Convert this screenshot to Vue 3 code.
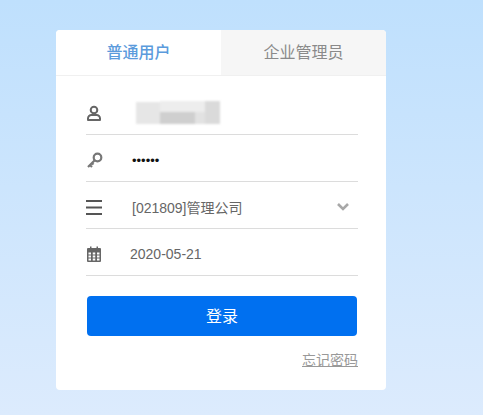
<script setup>
const tabs = [
  { label: '普通用户', active: true },
  { label: '企业管理员', active: false }
]
</script>

<template>
  <div class="page">
    <div class="card">
      <div class="tabs">
        <div v-for="t in tabs" :key="t.label" class="tab" :class="{ active: t.active }">{{ t.label }}</div>
      </div>
      <div class="form">
        <div class="row">
          <span class="icon">
            <svg width="16" height="16" viewBox="0 0 16 16" fill="none" stroke="#666" stroke-width="2">
              <circle cx="8" cy="5" r="3.3" />
              <path d="M2 15v-1.500c0-2 1.600-3.500 3.500-3.500h5c1.900 0 3.500 1.500 3.500 3.500V15z" stroke-linejoin="round" />
            </svg>
          </span>
          <div class="mosaic">
            <i class="m1"></i><i class="m2"></i><i class="m3"></i><i class="m4"></i><i class="m5"></i>
          </div>
        </div>
        <div class="row">
          <span class="icon">
            <svg width="18" height="18" viewBox="0 0 18 18" fill="none" stroke="#777" stroke-width="2.2">
              <circle cx="11.500" cy="6.500" r="3.800" />
              <path d="M8.500 9.500L2 16M4 14l2 2M6 12l1.500 1.500" />
            </svg>
          </span>
          <span class="dots">••••••</span>
        </div>
        <div class="row">
          <span class="icon">
            <svg width="16" height="15" viewBox="0 0 16 15" fill="#555">
              <rect y="0" width="16" height="2" />
              <rect y="6.500" width="16" height="2" />
              <rect y="13" width="16" height="2" />
            </svg>
          </span>
          <span class="value">[021809]管理公司</span>
          <svg class="chev" width="12" height="8" viewBox="0 0 12 8" fill="none" stroke="#a8a8a8" stroke-width="2.600">
            <path d="M1 1l5 5 5-5" />
          </svg>
        </div>
        <div class="row">
          <span class="icon cal">
            <svg width="14" height="16" viewBox="0 0 14 16">
              <path fill="#666" d="M1 2h2V0.500h1.500V2h5V0.500H11V2h2a1 1 0 0 1 1 1v12a1 1 0 0 1-1 1H1a1 1 0 0 1-1-1V3a1 1 0 0 1 1-1z" />
              <path fill="#fff" d="M1.500 6.500h2.500v2H1.500zM5.750 6.500h2.500v2h-2.500zM10 6.500h2.500v2H10zM1.500 9.500h2.500v2H1.500zM5.750 9.500h2.500v2h-2.500zM10 9.500h2.500v2H10zM1.500 12.500h2.500v2H1.500zM5.750 12.500h2.500v2h-2.500zM10 12.500h2.500v2H10z" />
            </svg>
          </span>
          <span class="value date">2020-05-21</span>
        </div>
        <button class="login" type="button"><span>登录</span></button>
        <div class="forgot"><a>忘记密码</a></div>
      </div>
    </div>
  </div>
</template>

<style scoped>
.page {
  width: 483px;
  height: 415px;
  box-sizing: border-box;
  padding: 30px 0 0 56px;
  overflow: hidden;
  background: linear-gradient(180deg, #bfe0fd 0%, #dcebfd 100%);
  font-family: "Liberation Sans", "Noto Sans CJK SC", sans-serif;
}
.card {
  width: 330px;
  height: 360px;
  background: #fff;
  border-radius: 4px;
  overflow: hidden;
}
.tabs {
  display: flex;
  height: 45px;
  border-bottom: 1px solid #f0f0f0;
}
.tab {
  flex: 1;
  text-align: center;
  line-height: 45px;
  font-size: 16px;
  color: #8a8a8a;
  background: #f6f6f6;
}
.tab.active {
  color: #5b9bdc;
  font-weight: 500;
  background: #fff;
}
.form {
  padding: 12px 28px 0 30px;
}
.row {
  display: flex;
  align-items: center;
  box-sizing: border-box;
  height: 47px;
  padding-top: 4px;
  border-bottom: 1px solid #dcdcdc;
}
.icon {
  width: 46px;
  display: flex;
  flex: none;
}
.icon.cal {
  padding-left: 1px;
  width: 45px;
}
.mosaic {
  position: relative;
  width: 88px;
  height: 24px;
  margin-top: -2px;
  filter: blur(1px);
}
.mosaic i {
  position: absolute;
  display: block;
}
.mosaic .m1 { left: 4px; top: 2px; width: 24px; height: 22px; background: #e6e6e6; }
.mosaic .m2 { left: 28px; top: 12px; width: 35px; height: 12px; background: #cfcfcf; }
.mosaic .m3 { left: 28px; top: 1px; width: 60px; height: 11px; background: #ededed; }
.mosaic .m4 { left: 63px; top: 12px; width: 10px; height: 12px; background: #e2e2e2; }
.mosaic .m5 { left: 73px; top: 1px; width: 15px; height: 23px; background: #dadada; }
.dots {
  font-size: 13px;
  color: #111;
}
.value {
  font-size: 14px;
  color: #666;
}
.date {
  margin-left: -2px;
}
.chev {
  margin-left: auto;
  margin-right: 9px;
}
.login {
  display: block;
  width: 270px;
  height: 40px;
  margin: 20px 0 0 1px;
  padding: 0 0 3px;
  border: 0;
  border-radius: 4px;
  background: #0070f0;
  color: #fff;
  font-family: inherit;
  font-size: 16px;
}
.forgot {
  margin-top: 14px;
  text-align: right;
  font-size: 14px;
  line-height: 20px;
  color: #999;
}
.forgot a {
  text-decoration: underline;
}
</style>
